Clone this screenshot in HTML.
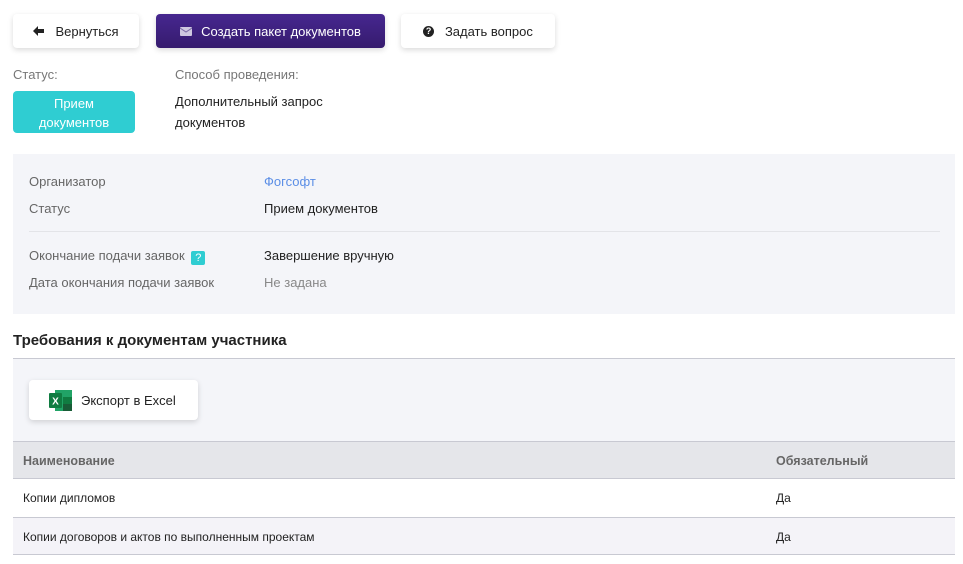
<!DOCTYPE html>
<html><head><meta charset="utf-8"><style>
*{box-sizing:border-box;margin:0;padding:0}
body{width:963px;height:564px;overflow:hidden;background:#fff;font-family:"Liberation Sans",sans-serif;font-size:13px;color:#222;position:relative}
.a{position:absolute}
.btn{position:absolute;top:14px;height:34px;border-radius:4px;background:#fff;box-shadow:0 2px 6px rgba(0,0,0,.15);display:flex;align-items:center;justify-content:center;font-size:13px;color:#222}
.lbl{color:#777;font-size:13px}
.row{position:absolute;font-size:13px}
</style></head><body>
<div class="btn" style="left:13px;width:126px"><svg width="11" height="10" viewBox="0 0 11 10"><path d="M0 5 L5 0 V3 H11 V7 H5 V10 Z" fill="#222"/></svg><span style="margin-left:11px">Вернуться</span></div>
<div class="btn" style="left:156px;width:229px;background:linear-gradient(#46278f,#361b6e);color:#fff"><svg width="12" height="9" viewBox="0 0 12 9"><rect width="12" height="9" rx="1" fill="#cfc8e0"/><path d="M0 1 L6 5 L12 1" stroke="#7a6aa6" fill="none"/></svg><span style="margin-left:9px">Создать пакет документов</span></div>
<div class="btn" style="left:401px;width:154px"><span style="display:inline-block;width:11px;height:11px;border-radius:50%;background:#222;color:#fff;font-size:9px;font-weight:bold;text-align:center;line-height:11px">?</span>&nbsp;&nbsp;&nbsp;Задать вопрос</div>
<div class="a lbl" style="left:13px;top:67px">Статус:</div>
<div class="a lbl" style="left:175px;top:67px">Способ проведения:</div>
<div class="a" style="left:13px;top:91px;width:122px;height:42px;background:#2fcdd2;border-radius:4px;color:#fff;text-align:center;line-height:19px;padding-top:3px">Прием<br>документов</div>
<div class="a" style="left:175px;top:91px;line-height:21px">Дополнительный запрос<br>документов</div>
<div class="a" style="left:13px;top:154px;width:942px;height:160px;background:#f4f5f9"></div>
<div class="row" style="left:29px;top:174px;color:#666">Организатор</div>
<div class="row" style="left:264px;top:174px;color:#5b8ee6">Фогсофт</div>
<div class="row" style="left:29px;top:201px;color:#666">Статус</div>
<div class="row" style="left:264px;top:201px">Прием документов</div>
<div class="a" style="left:29px;top:231px;width:911px;height:1px;background:#e3e4e8"></div>
<div class="row" style="left:29px;top:248px;color:#666">Окончание подачи заявок <span style="display:inline-block;width:14px;height:14px;background:#2fcdd2;color:#fff;border-radius:2px;text-align:center;font-size:11px;line-height:14px;vertical-align:-1px;margin-left:3px">?</span></div>
<div class="row" style="left:264px;top:248px">Завершение вручную</div>
<div class="row" style="left:29px;top:275px;color:#666">Дата окончания подачи заявок</div>
<div class="row" style="left:264px;top:275px;color:#888">Не задана</div>
<div class="a" style="left:13px;top:332px;font-size:15px;font-weight:bold;color:#222">Требования к документам участника</div>
<div class="a" style="left:13px;top:358px;width:942px;height:83px;background:#f4f5f9;border-top:1px solid #c8c9d2"></div>
<div class="a" style="left:29px;top:380px;width:169px;height:40px;background:#fff;border-radius:4px;box-shadow:0 2px 6px rgba(0,0,0,.15);display:flex;align-items:center;padding-left:20px">
<svg width="23" height="21" viewBox="0 0 23 21"><rect x="6" y="0" width="17" height="21" fill="#21a366"/><rect x="14" y="7" width="9" height="7" fill="#107c41"/><rect x="14" y="14" width="9" height="7" fill="#185c37"/><rect x="0" y="3" width="13" height="15" rx="1" fill="#107c41"/><text x="6.5" y="14.5" font-size="10" font-weight="bold" fill="#fff" text-anchor="middle" font-family="Liberation Sans">X</text></svg>
<span style="margin-left:9px">Экспорт в Excel</span></div>
<div class="a" style="left:13px;top:441px;width:942px;height:38px;background:#e5e6ea;border-top:1px solid #c8c9d2;border-bottom:1px solid #c8c9d2"></div>
<div class="row" style="left:23px;top:454px;font-weight:bold;color:#666;font-size:12.5px">Наименование</div>
<div class="row" style="left:776px;top:454px;font-weight:bold;color:#666;font-size:12.5px">Обязательный</div>
<div class="a" style="left:13px;top:517px;width:942px;height:38px;background:#f4f3f8;border-top:1px solid #c8c9d2;border-bottom:1px solid #c8c9d2"></div>
<div class="row" style="left:23px;top:491px;font-size:12px">Копии дипломов</div>
<div class="row" style="left:776px;top:491px;font-size:12px">Да</div>
<div class="row" style="left:23px;top:530px;font-size:12px">Копии договоров и актов по выполненным проектам</div>
<div class="row" style="left:776px;top:530px;font-size:12px">Да</div>
</body></html>
